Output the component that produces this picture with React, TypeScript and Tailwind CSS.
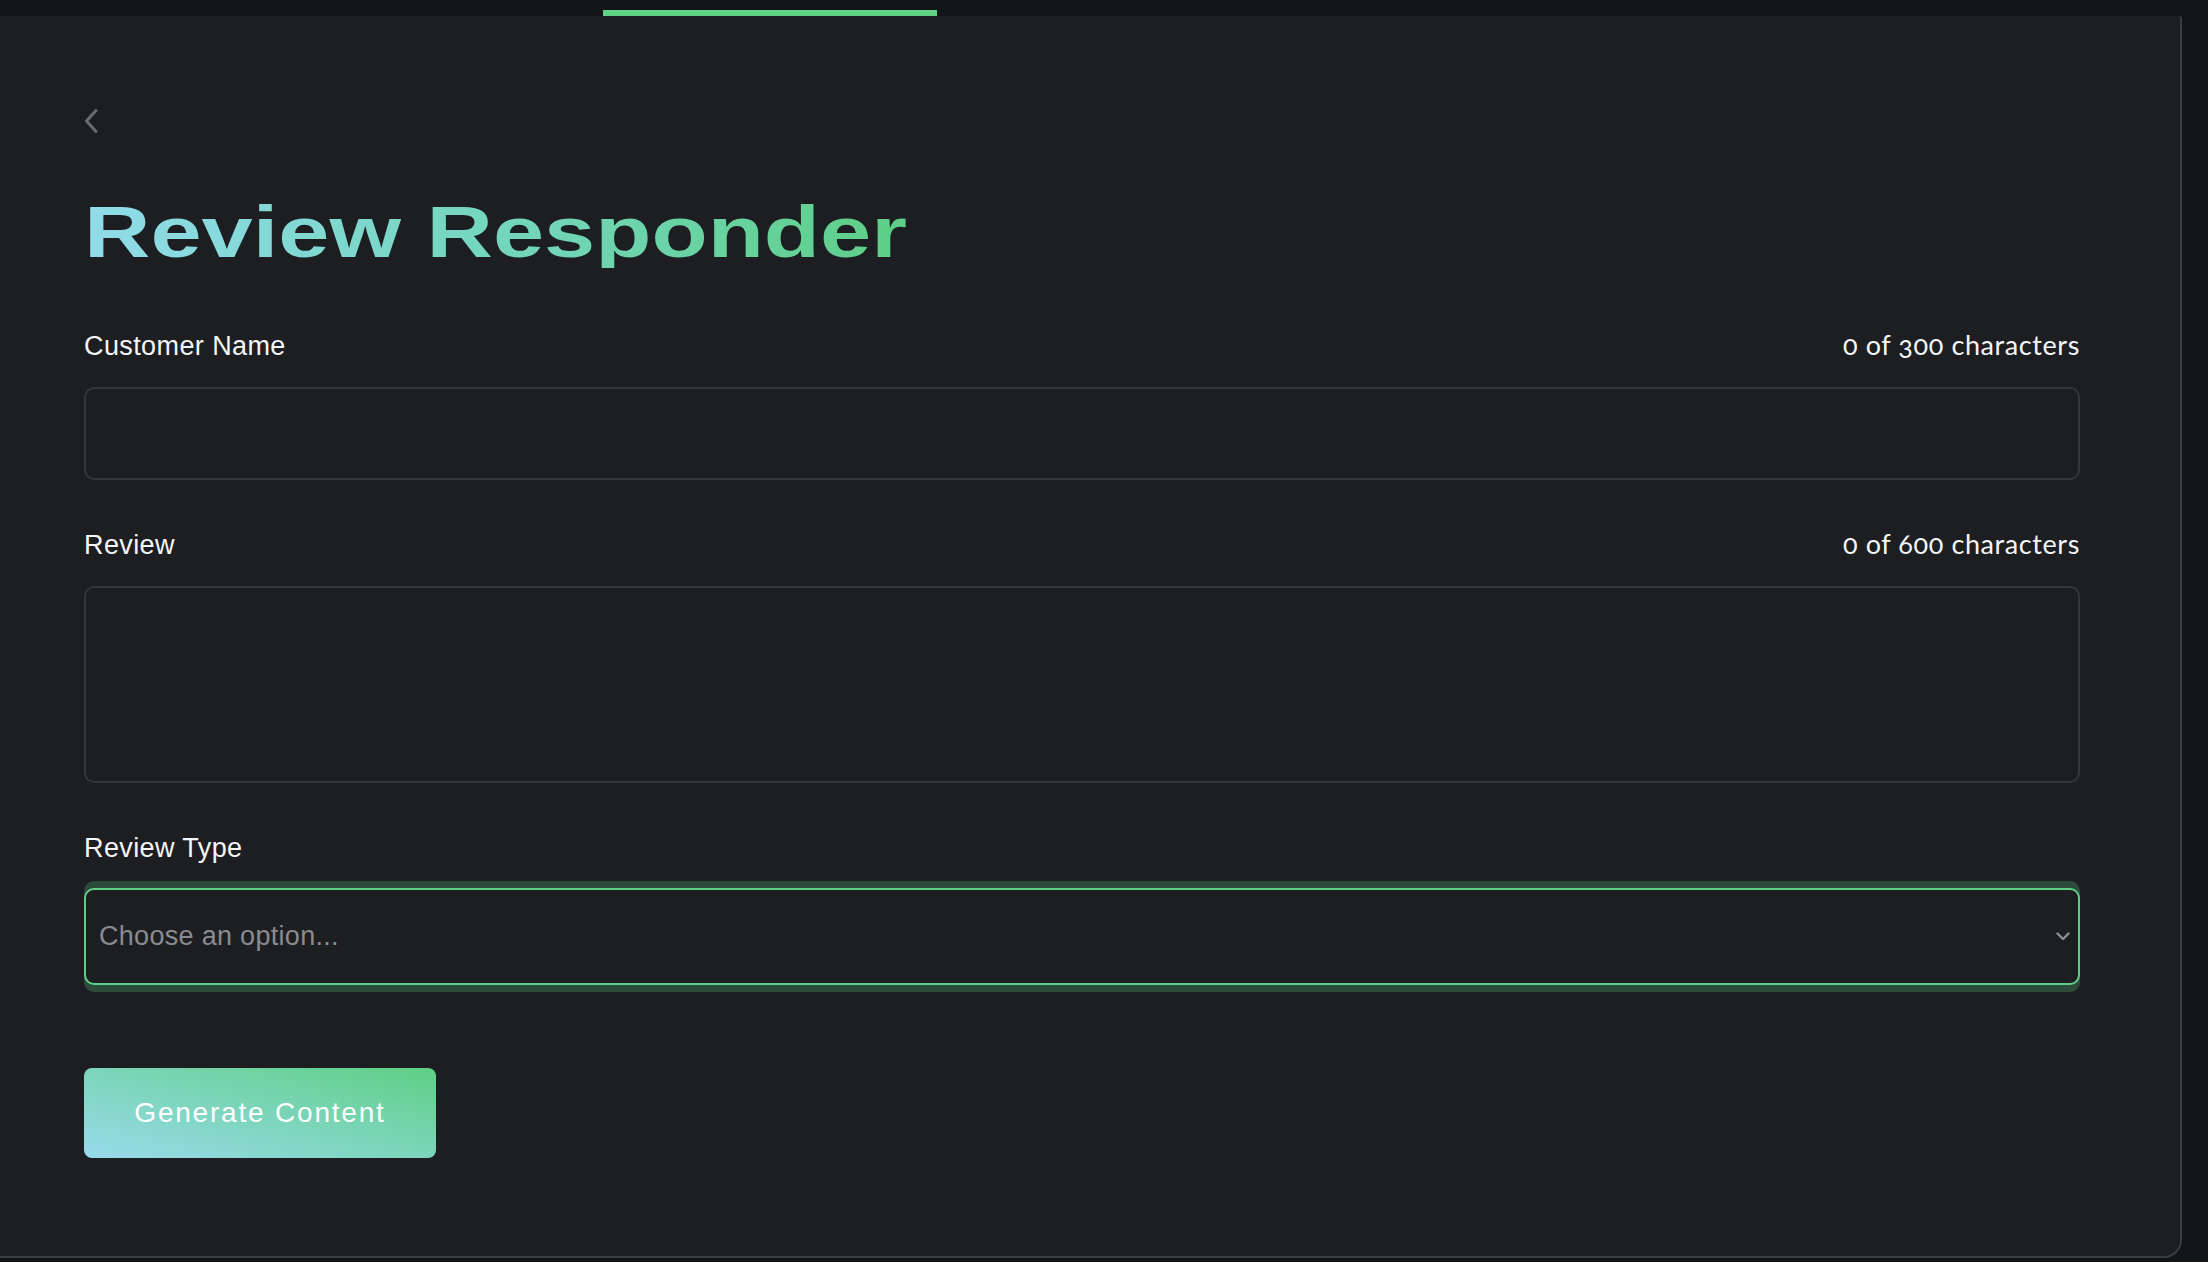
import React from "react";

export default function App() {
  return (
    <div className="min-h-[1262px] w-[2208px] bg-[#111518] font-['Liberation_Sans',Arial,sans-serif] text-white">
      {/* top bar */}
      <div className="h-[16px] flex">
        <div className="ml-[603px] mt-[10px] h-[6px] w-[334px] bg-[#5ed185]" />
      </div>

      {/* card */}
      <div className="w-[2182px] h-[1242px] bg-[#1d1e21] border-r-2 border-b-2 border-[#3b3c40] rounded-br-[18px] rounded-tr-[3px] pl-[84px] pr-[100px] pt-[93px] flex flex-col">
        <button className="w-[14px] h-[24px] flex items-start">
          <svg width="14" height="24" viewBox="0 0 14 24" fill="none">
            <path d="M12 1.5 L2.5 12 L12 22.5" stroke="#6b6c70" strokeWidth="3" strokeLinecap="round" strokeLinejoin="round" />
          </svg>
        </button>

        <h1 className="mt-[62px] h-[73px] text-[73px] leading-[73px] font-bold whitespace-nowrap">
          <span className="inline-block origin-left scale-x-[1.26] bg-linear-to-r from-[#90dbe9] via-[#74d6bd] to-[#5ecf86] bg-clip-text text-transparent">
            Review Responder
          </span>
        </h1>

        {/* Customer Name */}
        <div className="mt-[61px] flex justify-between items-baseline h-[32px] text-[27px] leading-[32px] tracking-[0.4px] text-[#f4f5f6]">
          <span>Customer Name</span>
          <span className="font-['Lato',sans-serif] text-[27px] tracking-[0.6px] oldstyle-nums">0 of 300 characters</span>
        </div>
        <input
          className="mt-[26px] h-[93px] w-full rounded-[10px] border-2 border-[#35363a] bg-[#1d1e21] outline-none px-[14px] text-[27px]"
          type="text"
        />

        {/* Review */}
        <div className="mt-[48px] flex justify-between items-baseline h-[32px] text-[27px] leading-[32px] tracking-[0.4px] text-[#f4f5f6]">
          <span>Review</span>
          <span className="font-['Lato',sans-serif] text-[27px] tracking-[0.6px] oldstyle-nums">0 of 600 characters</span>
        </div>
        <textarea className="mt-[26px] h-[197px] w-full rounded-[10px] border-2 border-[#35363a] bg-[#1d1e21] outline-none px-[14px] py-[10px] resize-none text-[27px]" />

        {/* Review Type */}
        <div className="mt-[49px] h-[32px] text-[27px] leading-[32px] tracking-[0.4px] text-[#f4f5f6]">
          Review Type
        </div>
        <div className="mt-[17px] w-full rounded-[10px] bg-[#2d4b3a] py-[7px]">
          <div className="h-[97px] w-full rounded-[10px] border-2 border-[#5fcf86] bg-[#1d1e21] flex items-center justify-between pl-[13px] pr-[8px]">
            <span className="text-[27px] tracking-[0.3px] text-[#8a8b8f]">Choose an option...</span>
            <svg width="14" height="9" viewBox="0 0 14 9" fill="none">
              <path d="M1.5 1.5 L7 7 L12.5 1.5" stroke="#8f9093" strokeWidth="2.4" strokeLinecap="round" strokeLinejoin="round" />
            </svg>
          </div>
        </div>

        {/* Button */}
        <button className="mt-[76px] h-[90px] w-[352px] rounded-[8px] bg-linear-to-tr from-[#98daeb] to-[#5ecf84] text-[28px] tracking-[1.8px] text-white flex items-center justify-center">
          Generate Content
        </button>
      </div>
    </div>
  );
}
